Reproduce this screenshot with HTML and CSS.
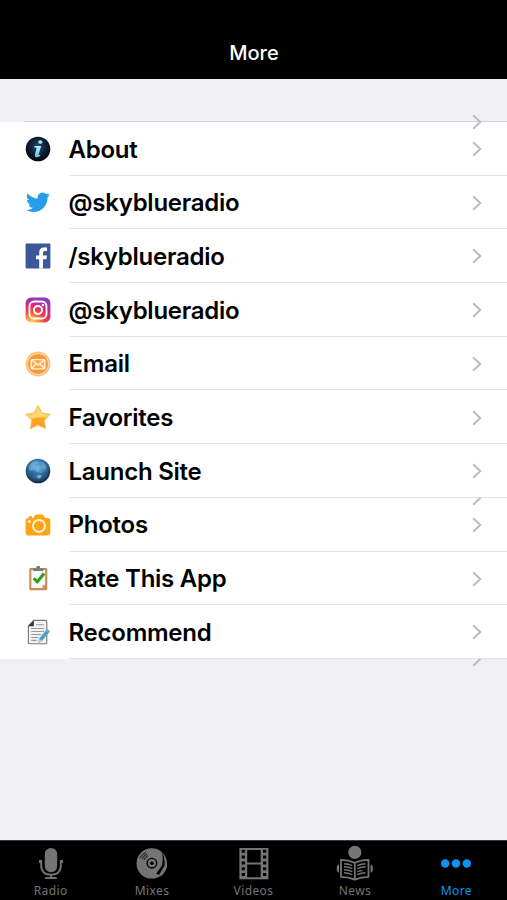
FILE: index.html
```html
<!DOCTYPE html>
<html lang="en">
<head>
  <meta charset="UTF-8" />
  <meta name="viewport" content="width=device-width, initial-scale=1.0"/>
  <title>More</title>
  <link rel="stylesheet" href="styles.css">
</head>
<body>
  <svg class="defs" width="0" height="0">
    <defs>
      <radialGradient id="infoBg" cx="50%" cy="40%" r="60%">
        <stop offset="0" stop-color="#234a73"/><stop offset=".6" stop-color="#0d1c30"/><stop offset="1" stop-color="#02050a"/>
      </radialGradient>
      <linearGradient id="infoText" x1="0" y1="0" x2="0" y2="1">
        <stop offset="0" stop-color="#c4ecff"/><stop offset="1" stop-color="#55c8f5"/>
      </linearGradient>
      <radialGradient id="instaWarm" cx="25%" cy="105%" r="105%">
        <stop offset="0" stop-color="#ffda70"/><stop offset=".25" stop-color="#fb9a3c"/><stop offset=".5" stop-color="#f0453f"/><stop offset=".75" stop-color="#d42a86"/><stop offset="1" stop-color="#8a38bd"/>
      </radialGradient>
      <linearGradient id="starFill" x1="0" y1="0" x2="0" y2="1">
        <stop offset="0" stop-color="#ffd65c"/><stop offset=".5" stop-color="#ffca45"/><stop offset=".55" stop-color="#fda51f"/><stop offset="1" stop-color="#f8a02c"/>
      </linearGradient>
      <radialGradient id="globeFill" cx="48%" cy="38%" r="58%">
        <stop offset="0" stop-color="#79b9e0"/><stop offset=".55" stop-color="#397cae"/><stop offset="1" stop-color="#142d49"/>
      </radialGradient>
      <symbol id="chevron" viewBox="0 0 10 16">
        <path d="M1.2 1.3L8.2 8L1.2 14.7" fill="none" stroke="#bdbdc0" stroke-width="2"/>
      </symbol>
    </defs>
  </svg>

  <div class="app">
    <header class="navbar">
      <h1 class="title">More</h1>
    </header>

    <main class="content">
      <ul class="menu">
        <li class="row">
          <svg class="icon" viewBox="0 0 26 26">
            <circle cx="13" cy="13" r="12.3" fill="url(#infoBg)"/>
            <ellipse cx="15.3" cy="6.1" rx="2.2" ry="1.8" fill="#a9dcf4"/>
            <path d="M9.6 9.9H16.2L13.7 18.2Q13.4 19.4 15.4 18.5L14.9 20.2Q9 22.8 10 18.3L11.7 11.8L9.3 11.5Z" fill="url(#infoText)"/>
          </svg>
          <div class="cell"><span class="label">About</span><svg class="chevron"><use href="#chevron"/></svg></div>
          <svg class="chevron stray top"><use href="#chevron"/></svg>
        </li>
        <li class="row">
          <svg class="icon" viewBox="0 0 26 26">
            <path transform="translate(1 .3)" d="M23.95 4.57a10 10 0 0 1-2.82.77 4.96 4.96 0 0 0 2.16-2.72c-.95.55-2 .95-3.13 1.18a4.92 4.92 0 0 0-8.38 4.48C7.69 8.1 4.07 6.13 1.64 3.16a4.92 4.92 0 0 0 1.52 6.57 4.9 4.9 0 0 1-2.23-.61v.06a4.92 4.92 0 0 0 3.95 4.83 5 5 0 0 1-2.21.08 4.94 4.94 0 0 0 4.6 3.42A9.87 9.87 0 0 1 0 19.54a14 14 0 0 0 7.55 2.21c9.05 0 14-7.5 14-13.98 0-.21 0-.42-.02-.63a9.9 9.9 0 0 0 2.42-2.57z" fill="#259eea"/>
          </svg>
          <div class="cell"><span class="label">@skyblueradio</span><svg class="chevron"><use href="#chevron"/></svg></div>
        </li>
        <li class="row">
          <svg class="icon" viewBox="0 0 26 26">
            <rect x=".6" y=".6" width="24.8" height="24.8" rx="1" fill="#3b5899"/>
            <path d="M14.2 25.4V16.2H11V12.4H14.2V9.5Q14.2 4.4 19 4.4H22V8H20Q18 8 18 9.8V12.4H22L21.4 16.2H18V25.4Z" fill="#fff"/>
          </svg>
          <div class="cell"><span class="label">/skyblueradio</span><svg class="chevron"><use href="#chevron"/></svg></div>
        </li>
        <li class="row">
          <svg class="icon" viewBox="0 0 26 26">
            <rect x=".6" y=".6" width="24.8" height="24.8" rx="5.5" fill="url(#instaWarm)"/>
            <rect x="4.5" y="4.5" width="17" height="17" rx="4.6" fill="none" stroke="#fff" stroke-width="1.8"/>
            <circle cx="13" cy="13" r="4" fill="none" stroke="#fff" stroke-width="1.9"/>
            <circle cx="18" cy="8" r="1.2" fill="#fff"/>
          </svg>
          <div class="cell"><span class="label">@skyblueradio</span><svg class="chevron"><use href="#chevron"/></svg></div>
        </li>
        <li class="row">
          <svg class="icon" viewBox="0 0 26 26">
            <circle cx="13" cy="13" r="12.4" fill="#fbc27c"/>
            <circle cx="13" cy="13" r="10.5" fill="#f59a35" stroke="#ffe0b5" stroke-width=".9"/>
            <rect x="6.2" y="8.6" width="13.6" height="9.3" rx="1.2" fill="#f9a94f" stroke="#fff3df" stroke-width="1.4"/>
            <path d="M6.6 9L13 14L19.4 9M6.6 17.5L11 12.7M19.4 17.5L15 12.7" fill="none" stroke="#fff3df" stroke-width="1.3"/>
          </svg>
          <div class="cell"><span class="label">Email</span><svg class="chevron"><use href="#chevron"/></svg></div>
        </li>
        <li class="row">
          <svg class="icon" viewBox="0 0 26 26">
            <path d="M13 1.2L16.8 8.9L25.2 10.2L19.2 16.3L20.5 24.6L13 21L5.5 24.6L6.8 16.3L.8 10.2L9.2 8.9Z" fill="url(#starFill)" stroke="#f4b34c" stroke-width=".8" stroke-linejoin="round"/>
            <path d="M13 3L16.2 9.6L23.6 10.9L19 13.3Q11 12.5 6.5 15.6L2.4 10.9L9.8 9.6Z" fill="#ffe18a" opacity=".6"/>
          </svg>
          <div class="cell"><span class="label">Favorites</span><svg class="chevron"><use href="#chevron"/></svg></div>
        </li>
        <li class="row">
          <svg class="icon" viewBox="0 0 26 26">
            <circle cx="13" cy="13" r="12.3" fill="url(#globeFill)"/>
            <path d="M4 8Q7 3 12 3L14 5L10 7L11 9L7 12L4 12Z" fill="#9bcbe8" opacity=".4"/>
            <path d="M15 4Q20 4 22 9L20 12L16 10L17 7Z" fill="#9bcbe8" opacity=".3"/>
            <path d="M3 14Q8 11 12 14L16 15L22 13Q21 18 17 19L12 17L7 19Z" fill="#1c517e" opacity=".45"/>
            <path d="M13 17L17 17.5L15 20.5L12 20Z" fill="#a9d6eb" opacity=".65"/>
          </svg>
          <div class="cell"><span class="label">Launch Site</span><svg class="chevron"><use href="#chevron"/></svg></div>
        </li>
        <li class="row">
          <svg class="icon" viewBox="0 0 26 26">
            <path d="M3 6.1H3.7V4.3H7V6.1H8.4L10 3.3Q10.4 2.6 11.2 2.6H17.4Q18.2 2.6 18.6 3.3L20 6.1H22.5Q25.3 6.1 25.3 8.8V20.8Q25.3 23.5 22.5 23.5H3.4Q.6 23.5 .6 20.8V8.8Q.6 6.1 3 6.1Z" fill="#ffa412"/>
            <circle cx="14" cy="13.9" r="6" fill="none" stroke="#fff3dc" stroke-width="2"/>
            <circle cx="4.4" cy="9.5" r="1.6" fill="#fff3dc"/>
          </svg>
          <div class="cell"><span class="label">Photos</span><svg class="chevron"><use href="#chevron"/></svg></div>
          <svg class="chevron stray half"><use href="#chevron"/></svg>
        </li>
        <li class="row">
          <svg class="icon" viewBox="0 0 26 26">
            <rect x="4.3" y="3" width="18" height="22.2" rx="1.4" fill="#c48b52"/>
            <path d="M6.3 5H20.2V19.3L17 23H6.3Z" fill="#f5f6f5"/>
            <path d="M20.2 19.3L17 23V19.8Z" fill="#c8cbc9"/>
            <path d="M8.2 6V3.2H11Q11.2 .8 13.2 .8T15.4 3.2H18.2V6Z" fill="#737a81"/>
            <path d="M8.7 13.2L12.3 16.8L19.1 8.5" fill="none" stroke="#35991d" stroke-width="3"/>
          </svg>
          <div class="cell"><span class="label">Rate This App</span><svg class="chevron"><use href="#chevron"/></svg></div>
        </li>
        <li class="row">
          <svg class="icon" viewBox="0 0 26 26">
            <path d="M8.8 1.4H20.5Q21.8 1.4 21.8 2.7V23.5Q21.8 24.8 20.5 24.8H4.7Q3.4 24.8 3.4 23.5V7Z" fill="#f3f3f3" stroke="#777" stroke-width="1.1"/>
            <path d="M8.8 1.2V7.2H3.2Z" fill="#333"/>
            <path d="M11 5.8H19M6.2 9.5H19M6.2 12.5H19M6.2 15.5H16M6.2 18.5H13.5M6.2 21.4H11.8" stroke="#999" stroke-width="1.1"/>
            <path d="M22.2 9.8L25 12.4L16.8 22.1L12.8 24.3L14 19.7Z" fill="#48a5cd"/>
            <path d="M22.2 9.8L25 12.4L23.9 13.7L21.1 11.1Z" fill="#8caebb"/>
            <path d="M14 19.7L16.8 22.1L12.8 24.3Z" fill="#d9c9a8"/>
          </svg>
          <div class="cell"><span class="label">Recommend</span><svg class="chevron"><use href="#chevron"/></svg></div>
          <svg class="chevron stray half bottom"><use href="#chevron"/></svg>
        </li>
      </ul>
    </main>

    <nav class="tabbar">
      <a class="tab">
        <svg class="tab-icon" viewBox="0 0 38 36">
          <rect x="12.8" y="1" width="12.4" height="24.2" rx="6.2" fill="currentColor"/>
          <path d="M9.2 13.5V18.5Q9.2 27.6 19 27.6T28.8 18.5V13.5M19 27.6V31" fill="none" stroke="currentColor" stroke-width="1.9"/>
          <path d="M7 14.5H10M28 14.5H31" stroke="currentColor" stroke-width="3"/>
          <path d="M12.8 32Q12.8 30 15 30H23Q25.2 30 25.2 32Z" fill="currentColor"/>
        </svg>
        <span class="tab-label">Radio</span>
      </a>
      <a class="tab">
        <svg class="tab-icon" viewBox="0 0 38 36">
          <circle cx="18.7" cy="16.4" r="15.2" fill="currentColor"/>
          <circle cx="18.9" cy="16.2" r="4.8" fill="none" stroke="#000" stroke-width="1.4"/>
          <circle cx="18.9" cy="16.2" r="1.8" fill="#000"/>
          <path d="M7 11Q9 7.2 13 5.3M8.8 12Q10.7 8.6 14 7M10.8 13Q12.2 10 15 8.6" fill="none" stroke="#000" stroke-width=".9"/>
          <path d="M29.3 5.5Q32.5 12 31.6 18.5L26 28L23.2 26.4L29.2 18.2Q30.2 12 29.3 5.5Z" fill="#000"/>
          <path d="M30.5 7Q34.8 14 34 19.5Q33 25 27 30L31.8 19.5Q32.5 13 30.5 7Z" fill="currentColor"/>
        </svg>
        <span class="tab-label">Mixes</span>
      </a>
      <a class="tab">
        <svg class="tab-icon" viewBox="0 0 38 36">
          <rect x="4.4" y="1" width="29" height="31.3" fill="currentColor"/>
          <path d="M12.2 3H25.7V15.6H12.2ZM12.2 17.4H25.7V30.3H12.2Z" fill="#000"/>
          <path d="M8.3 2.8V31M29.6 2.8V31" stroke="#000" stroke-width="3.2" stroke-dasharray="3 2.8"/>
        </svg>
        <span class="tab-label">Videos</span>
      </a>
      <a class="tab">
        <svg class="tab-icon" viewBox="0 0 38 36">
          <path d="M5 12.8Q12.5 12.8 18.8 15.8Q25 12.8 32.5 12.8V29.8Q25 29.8 18.8 32.6Q12.5 29.8 5 29.8Z" fill="#000" stroke="currentColor" stroke-width="1.8"/>
          <path d="M18.8 15.5V32" stroke="currentColor" stroke-width="1.8"/>
          <path d="M8 16.8Q12.5 17 16.3 18.6M8 19.8Q12.5 20 16.3 21.6M8 22.8Q12.5 23 16.3 24.6M8 25.8Q12.5 26 16.3 27.6M21.3 18.6Q25.5 17 29.5 16.8M21.3 21.6Q25.5 20 29.5 19.8M21.3 24.6Q24.5 23.6 26.5 23.4M21.3 27.6Q25.5 26 29.5 25.8" fill="none" stroke="currentColor" stroke-width="1.4"/>
          <path d="M3 17.4V25.4Q.7 25.4 .7 21.4T3 17.4ZM34.6 17.4V25.4Q36.9 25.4 36.9 21.4T34.6 17.4Z" fill="currentColor"/>
          <circle cx="18.8" cy="5.4" r="7.4" fill="#000"/>
          <circle cx="18.8" cy="5.4" r="6.6" fill="currentColor"/>
        </svg>
        <span class="tab-label">News</span>
      </a>
      <a class="tab active">
        <svg class="tab-icon" viewBox="0 0 38 36">
          <circle cx="8.2" cy="16.5" r="4.2" fill="currentColor"/>
          <circle cx="19" cy="16.5" r="4.2" fill="currentColor"/>
          <circle cx="29.8" cy="16.5" r="4.2" fill="currentColor"/>
        </svg>
        <span class="tab-label">More</span>
      </a>
    </nav>
  </div>
</body>
</html>
```
FILE: styles.css
```css
* {
  box-sizing: border-box;
}
body {
  margin: 0;
  background: #efeff4;
  font-family: Inter, "Liberation Sans", sans-serif;
}
.defs {
  position: absolute;
}
.app {
  display: flex;
  flex-direction: column;
  width: 100%;
  height: 100vh;
  overflow: hidden;
}
.navbar {
  height: 79px;
  padding-top: 39.5px;
  background: #000;
}
.title {
  margin: 0;
  color: #fff;
  font-size: 20px;
  font-weight: 500;
  line-height: 26px;
  text-align: center;
  padding-left: 1px;
}
.content {
  flex: 1;
  padding-top: 43px;
}
.menu {
  margin: 0;
  padding: 0;
  list-style: none;
  background: #fff;
}
.row {
  position: relative;
  display: flex;
  align-items: center;
  height: 53.7px;
  padding-left: 24.5px;
}
/* group outline starts at the icon, not at the label */
.row:first-child::before {
  content: "";
  position: absolute;
  top: -1px;
  left: 24px;
  right: 0;
  height: 1px;
  background: #d2d2d5;
}
.icon {
  width: 26px;
  height: 26px;
  flex: none;
}
.cell {
  display: flex;
  flex: 1;
  align-items: center;
  justify-content: space-between;
  height: 100%;
  margin-left: 18px;
  padding: 1.5px 25px 0 0;
  border-bottom: 1px solid #e5e5e7;
}
.label {
  color: #000;
  font-size: 24px;
  font-weight: 600;
  letter-spacing: -0.25px;
}
.chevron {
  width: 10px;
  height: 16px;
  flex: none;
}
.stray {
  position: absolute;
  right: 25px;
}
.stray.top {
  top: -8px;
}
.stray.half {
  top: -8px;
  clip-path: inset(8px 0 0 0);
}
.stray.bottom {
  top: auto;
  bottom: -8px;
}
.tabbar {
  display: flex;
  height: 60px;
  background: #000;
  border-top: 1px solid #39393b;
}
.tab {
  display: flex;
  flex: 1;
  flex-direction: column;
  align-items: center;
  padding-top: 6px;
  color: #747474;
}
.tab.active {
  color: #0b93f6;
}
.tab-icon {
  width: 38px;
  height: 36px;
  overflow: visible;
}
.tab-label {
  font-family: "Noto Sans", "Open Sans", sans-serif;
  font-size: 12px;
  line-height: 16px;
  letter-spacing: 0.4px;
}
```
